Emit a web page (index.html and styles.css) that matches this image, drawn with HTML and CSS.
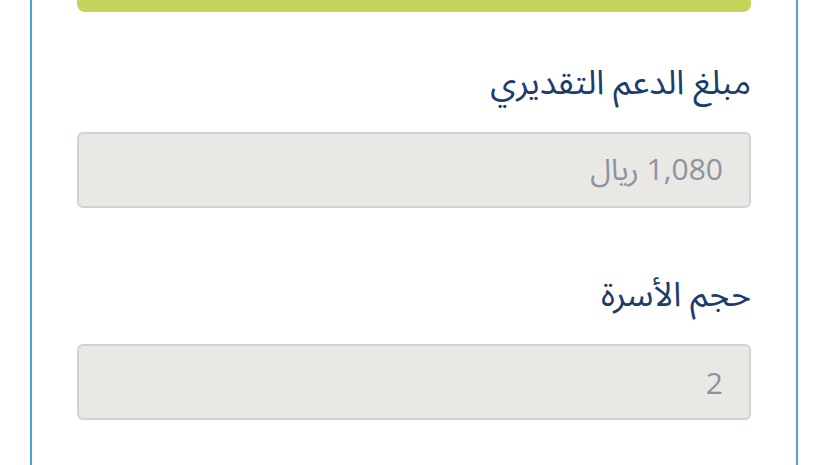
FILE: index.html
```html
<!DOCTYPE html>
<html lang="ar" dir="rtl">
<head>
  <meta charset="UTF-8" />
  <meta name="viewport" content="width=device-width, initial-scale=1.0" />
  <title>تفاصيل الدعم</title>
  <link rel="stylesheet" href="styles.css">
</head>
<body>
  <div class="card">
    <div class="status-bar"></div>

    <div class="field">
      <label class="field-label">مبلغ الدعم التقديري</label>
      <input class="field-input" type="text" value="1,080 ريال" disabled>
    </div>

    <div class="field">
      <label class="field-label">حجم الأسرة</label>
      <input class="field-input" type="text" value="2" disabled>
    </div>
  </div>
</body>
</html>
```

FILE: styles.css
```css
* {
  margin: 0;
  padding: 0;
  box-sizing: border-box;
}

body {
  background-color: #ffffff;
  font-family: 'Noto Sans Arabic', 'Open Sans', 'DejaVu Sans', sans-serif;
  overflow: hidden;
}

.card {
  width: 768px;
  height: 480px;
  margin: 0 29px 0 30px;
  padding: 0 45px;
  border-left: 2px solid #4f9fd9;
  border-right: 2px solid #4f9fd9;
  background-color: #ffffff;
}

.status-bar {
  height: 12px;
  background-color: #c4d35c;
  border-radius: 0 0 8px 8px;
}

.field {
  display: flex;
  flex-direction: column;
}

.field + .field {
  margin-top: 16px;
}

.field-label {
  margin-top: 48px;
  font-size: 34px;
  line-height: 46px;
  color: #1d3c6e;
}

.field-input {
  margin-top: 26px;
  height: 76px;
  padding: 0 26px;
  font-family: 'Open Sans', 'Noto Sans Arabic', 'DejaVu Sans', sans-serif;
  font-size: 30px;
  color: #8a949f;
  background-color: #e9e8e4;
  border: 2px solid #cfd3d7;
  border-radius: 6px;
  direction: rtl;
  text-align: right;
  -webkit-text-fill-color: #8a949f;
  opacity: 1;
}
```
